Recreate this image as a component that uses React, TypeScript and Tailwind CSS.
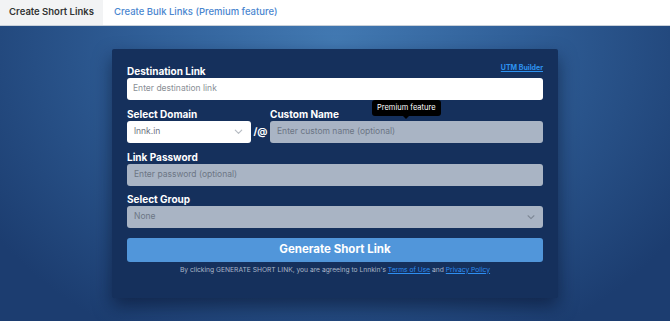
import React from 'react'

const Label: React.FC<{ children: React.ReactNode }> = ({ children }) => (
  <label className="block text-[10px] font-bold text-white leading-[12px] mb-px">{children}</label>
)

const Chevron: React.FC<{ className?: string }> = ({ className }) => (
  <svg viewBox="0 0 12 12" className={className} fill="none" stroke="currentColor" strokeWidth="1.3" strokeLinecap="round" strokeLinejoin="round">
    <path d="M2.5 4.5 6 8l3.5-3.5" />
  </svg>
)

export default function App() {
  return (
    <div className="w-[670px] h-[321px] overflow-hidden flex flex-col" style={{ fontFamily: 'Inter, "Noto Sans", sans-serif' }}>
      {/* Tabs */}
      <div className="h-[26px] bg-white border-b border-[#c9d1da] flex items-stretch shrink-0">
        <div className="w-[103px] bg-[#f2f3f4] flex items-center justify-center text-[9.5px] font-semibold text-[#333]">
          Create Short Links
        </div>
        <div className="pl-[11px] flex items-center text-[9.5px] font-medium text-[#4a86cf]">
          Create Bulk Links (Premium feature)
        </div>
      </div>

      {/* Main */}
      <div className="flex-1 pt-[23px] bg-[radial-gradient(ellipse_62%_115%_at_50%_5%,#4279b2_0%,#305f98_45%,#1c3d70_100%)]">
        <div className="mx-auto w-[446px] h-[249px] bg-[#15305c] rounded-[2px] shadow-[0_8px_18px_rgba(5,15,40,0.55)] px-[15px] pt-[14px]">
          {/* Destination */}
          <div className="flex items-end justify-between">
            <Label>Destination Link</Label>
            <a className="text-[7px] font-bold text-[#2e93f0] underline mb-[4px]">UTM Builder</a>
          </div>
          <div className="h-[22px] bg-white rounded-[3px] flex items-center px-[6px] text-[8.5px] text-[#8a8f96]">
            Enter destination link
          </div>

          {/* Domain + custom */}
          <div className="flex items-end mt-[8px]">
            <div className="w-[124px]">
              <Label>Select Domain</Label>
              <div className="h-[22px] bg-white rounded-[3px] flex items-center justify-between px-[7px] text-[8.5px] text-[#6b7280]">
                <span>lnnk.in</span>
                <Chevron className="w-[11px] h-[11px] text-[#b7bcc3]" />
              </div>
            </div>
            <div className="w-[19px] h-[22px] flex items-center justify-center text-white text-[10px] font-bold">
              /@
            </div>
            <div className="flex-1 relative">
              <Label>Custom Name</Label>
              <div className="h-[22px] bg-[#a9b4c4] rounded-[3px] flex items-center px-[7px] text-[8.5px] text-[#6c7684]">
                Enter custom name (optional)
              </div>
              <div className="absolute left-[102px] top-[-8px] bg-black rounded-[3px] px-[5px] h-[16px] flex items-center text-[7.5px] text-white whitespace-nowrap">
                Premium feature
                <span className="absolute left-1/2 -translate-x-1/2 bottom-[-3px] w-0 h-0 border-l-[3px] border-r-[3px] border-t-[3px] border-l-transparent border-r-transparent border-t-black" />
              </div>
            </div>
          </div>

          {/* Password */}
          <div className="mt-[8px]">
            <Label>Link Password</Label>
            <div className="h-[22px] bg-[#a9b4c4] rounded-[3px] flex items-center px-[7px] text-[8.5px] text-[#6c7684]">
              Enter password (optional)
            </div>
          </div>

          {/* Group */}
          <div className="mt-[7px]">
            <Label>Select Group</Label>
            <div className="h-[22px] bg-[#a9b4c4] rounded-[3px] flex items-center justify-between px-[7px] text-[8.5px] text-[#6c7684]">
              <span>None</span>
              <Chevron className="w-[10px] h-[10px] text-[#7e8896]" />
            </div>
          </div>

          {/* Button */}
          <button className="mt-[10px] w-full h-[24px] bg-[#5196da] rounded-[3px] text-white text-[11.5px] font-bold flex items-center justify-center">
            Generate Short Link
          </button>
          <p className="mt-[2px] text-center text-[6.7px] text-[#a9b6c8] leading-[12px]">
            By clicking GENERATE SHORT LINK, you are agreeing to Lnnkin's{' '}
            <a className="text-[#2e8ef0] underline">Terms of Use</a> and{' '}
            <a className="text-[#2e8ef0] underline">Privacy Policy</a>
          </p>
        </div>
      </div>
    </div>
  )
}
